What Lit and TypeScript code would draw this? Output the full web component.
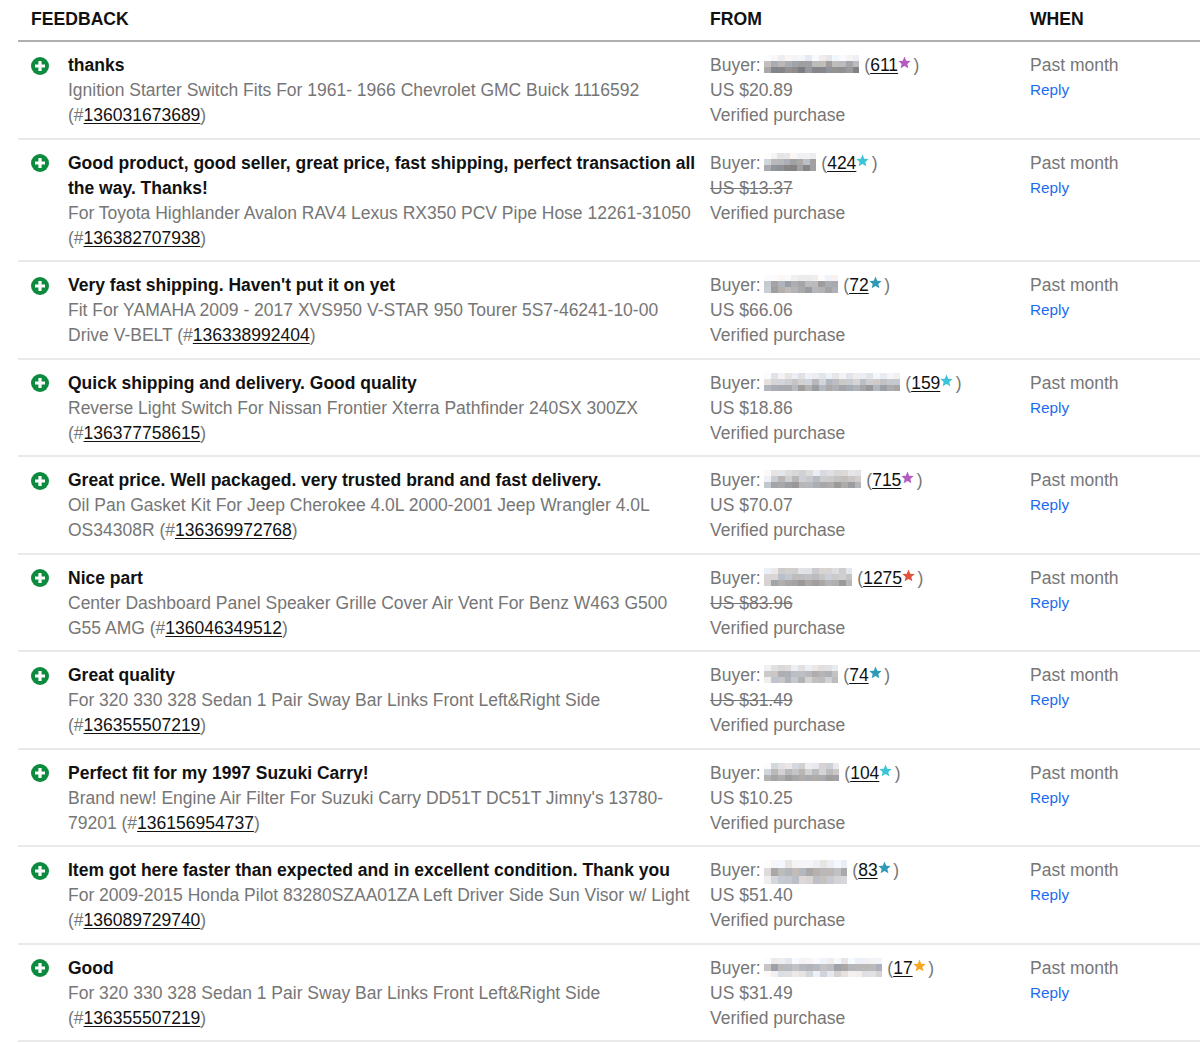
import { LitElement, html, css } from "lit";
import { customElement } from "lit/decorators.js";

interface Row {
  title: string; item: string; id: string;
  nameW: number; nameH: number; tones: number[]; seed: number;
  score: string; star: string; price: string; struck?: boolean;
}

const rows: Row[] = [
  { title: "thanks", item: "Ignition Starter Switch Fits For 1961- 1966 Chevrolet GMC Buick 1116592", id: "136031673689", nameW: 95, nameH: 18, tones: [240, 172, 140], seed: 3, score: "611", star: "#b45cc0", price: "US $20.89" },
  { title: "Good product, good seller, great price, fast shipping, perfect transaction all the way. Thanks!", item: "For Toyota Highlander Avalon RAV4 Lexus RX350 PCV Pipe Hose 12261-31050", id: "136382707938", nameW: 52, nameH: 18, tones: [240, 175, 145], seed: 7, score: "424", star: "#3cc4d8", price: "US $13.37", struck: true },
  { title: "Very fast shipping. Haven't put it on yet", item: "Fit For YAMAHA 2009 - 2017 XVS950 V-STAR 950 Tourer 5S7-46241-10-00 Drive V-BELT", id: "136338992404", nameW: 74, nameH: 18, tones: [240, 172, 172], seed: 11, score: "72", star: "#2f9ab8", price: "US $66.06" },
  { title: "Quick shipping and delivery. Good quality", item: "Reverse Light Switch For Nissan Frontier Xterra Pathfinder 240SX 300ZX", id: "136377758615", nameW: 136, nameH: 18, tones: [235, 198, 168], seed: 13, score: "159", star: "#3cc4d8", price: "US $18.86" },
  { title: "Great price. Well packaged. very trusted brand and fast delivery.", item: "Oil Pan Gasket Kit For Jeep Cherokee 4.0L 2000-2001 Jeep Wrangler 4.0L OS34308R", id: "136369972768", nameW: 97, nameH: 18, tones: [225, 195, 168], seed: 17, score: "715", star: "#b45cc0", price: "US $70.07" },
  { title: "Nice part", item: "Center Dashboard Panel Speaker Grille Cover Air Vent For Benz W463 G500 G55 AMG", id: "136046349512", nameW: 88, nameH: 18, tones: [215, 198, 168], seed: 19, score: "1275", star: "#e0533d", price: "US $83.96", struck: true },
  { title: "Great quality", item: "For 320 330 328 Sedan 1 Pair Sway Bar Links Front Left&Right Side", id: "136355507219", nameW: 74, nameH: 18, tones: [225, 185, 195], seed: 23, score: "74", star: "#2f9ab8", price: "US $31.49", struck: true },
  { title: "Perfect fit for my 1997 Suzuki Carry!", item: "Brand new! Engine Air Filter For Suzuki Carry DD51T DC51T Jimny's 13780-79201", id: "136156954737", nameW: 75, nameH: 18, tones: [222, 198, 160], seed: 29, score: "104", star: "#3cc4d8", price: "US $10.25" },
  { title: "Item got here faster than expected and in excellent condition. Thank you", item: "For 2009-2015 Honda Pilot 83280SZAA01ZA Left Driver Side Sun Visor w/ Light", id: "136089729740", nameW: 83, nameH: 24, tones: [238, 178, 205], seed: 31, score: "83", star: "#2f9ab8", price: "US $51.40" },
  { title: "Good", item: "For 320 330 328 Sedan 1 Pair Sway Bar Links Front Left&Right Side", id: "136355507219", nameW: 118, nameH: 20, tones: [240, 178, 225], seed: 37, score: "17", star: "#f5a623", price: "US $31.49" },
];

function cells(r: Row) {
  const n = Math.round(r.nameW / 6.8);
  let s = r.seed * 7919;
  const next = () => { s = (s * 1103515245 + 12345) & 0x7fffffff; return ((s >> 8) % 1000) / 1000; };
  const out: string[] = [];
  r.tones.forEach(tone => {
    for (let c = 0; c < n; c++) {
      const spread = tone > 225 ? 22 : 34;
      const v = Math.min(252, Math.round(tone + next() * spread - spread / 2 + (c === 0 ? 30 : 0)));
      const tint = Math.round(next() * 10 - 5);
      out.push(`rgb(${v + tint},${v},${Math.min(255, v - tint + 3)})`);
    }
  });
  return { n, out };
}

@customElement("app-root")
export class AppRoot extends LitElement {
  static styles = css`
    :host {
      display: block;
      padding-left: 18px;
      font-family: "Liberation Sans", Arial, sans-serif;
      font-size: 17.5px;
      line-height: 25px;
      color: #767676;
      background: #fff;
    }
    .grid {
      display: grid;
      grid-template-columns: 50px 642px 320px 1fr;
    }
    .head {
      height: 40px;
      border-bottom: 2px solid #b0b0b0;
      font-weight: 700;
      color: #111;
      align-items: center;
      font-size: 17.6px;
    }
    .head .fb { grid-column: 1 / span 2; padding-left: 13px; }
    .head div { padding-bottom: 2px; }
    .row {
      padding: 11px 0 9.5px;
      border-bottom: 2px solid #e9e9e9;
    }
    .ic { padding: 3.5px 0 0 13px; }
    .ic svg { display: block; width: 18px; height: 18px; }
    .main { padding-right: 12px; }
    .title { font-weight: 700; color: #111; }
    a { color: #111; text-decoration: underline; text-underline-offset: 2px; }
    .blur {
      display: inline-block;
      vertical-align: top;
      margin: 2px 0 -3px -1px;
    }
    .cells {
      display: grid;
      height: 100%;
      grid-template-rows: repeat(3, 1fr);
    }
    .star { width: 13px; height: 13px; vertical-align: 2px; margin: 0 2.5px 0 0; }
    .struck { text-decoration: line-through; }
    .reply {
      display: block;
      color: #1a6cf0;
      font-size: 15.3px;
      line-height: 23px;
      text-decoration: none;
    }
  `;

  private name(r: Row) {
    const { n, out } = cells(r);
    return html`<span class="blur" style="width:${r.nameW}px;height:${r.nameH}px"><span class="cells" style="grid-template-columns:repeat(${n},1fr)">${out.map(c => html`<i style="background:${c}"></i>`)}</span></span>`;
  }

  render() {
    return html`
      <div class="grid head">
        <div class="fb">FEEDBACK</div><div>FROM</div><div>WHEN</div>
      </div>
      ${rows.map(r => html`
        <div class="grid row">
          <div class="ic">
            <svg viewBox="0 0 18 18"><circle cx="9" cy="9" r="9" fill="#0c8a3e"/><path d="M7.4 4h3.2v3.4H14v3.2h-3.4V14H7.4v-3.4H4V7.4h3.4z" fill="#fff"/></svg>
          </div>
          <div class="main">
            <div class="title">${r.title}</div>
            <div>${r.item} (#<a href="#">${r.id}</a>)</div>
          </div>
          <div>
            <div>Buyer: ${this.name(r)} (<a href="#">${r.score}</a><svg class="star" viewBox="0 0 24 24"><path fill="${r.star}" d="M12 1l3.2 7.6 8.2.7-6.2 5.4 1.9 8L12 18.4l-7.1 4.3 1.9-8L.6 9.3l8.2-.7z"/></svg>)</div>
            <div class=${r.struck ? "struck" : ""}>${r.price}</div>
            <div>Verified purchase</div>
          </div>
          <div>
            <div>Past month</div>
            <a class="reply" href="#">Reply</a>
          </div>
        </div>
      `)}
    `;
  }
}
